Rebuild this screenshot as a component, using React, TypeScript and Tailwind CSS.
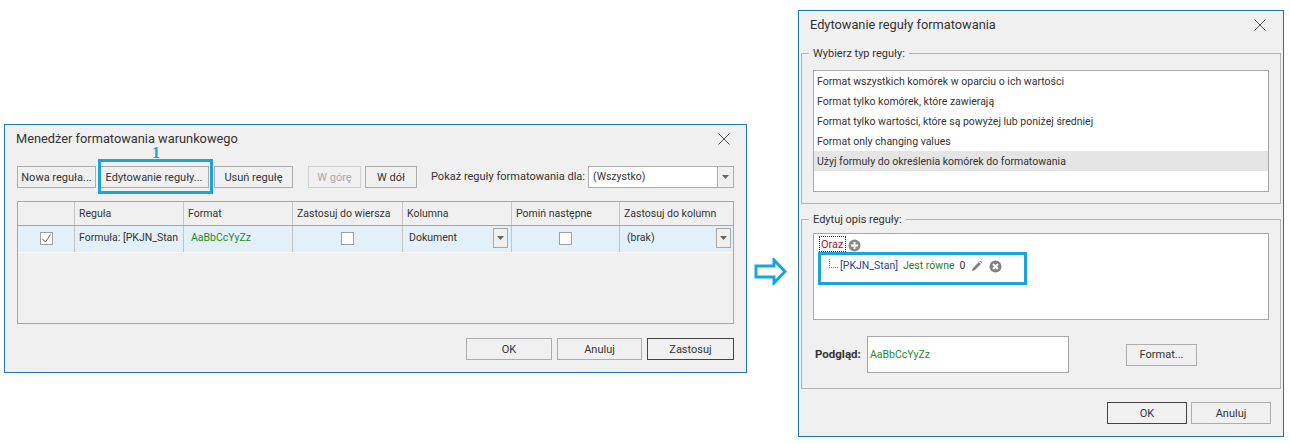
import { ReactNode } from 'react';

const font = "font-['Roboto',sans-serif]";

function Btn({ w, children, dark, disabled }: { w: string; children: ReactNode; dark?: boolean; disabled?: boolean }) {
  return (
    <button
      className={`${w} h-[22px] shrink-0 border bg-[#f0f0f0] text-[11px] leading-none ${
        dark ? 'border-[#444444] text-[#333333]' : disabled ? 'border-[#d0d0d0] text-[#a8a8a8]' : 'border-[#adadad] text-[#333333]'
      }`}
    >
      {children}
    </button>
  );
}

function Close() {
  return (
    <svg width="12" height="12" viewBox="0 0 12 12" className="shrink-0">
      <path d="M.5.5l11 11M11.5.5l-11 11" stroke="#555555" strokeWidth="1" fill="none" />
    </svg>
  );
}

function Caret() {
  return (
    <svg width="7" height="4" viewBox="0 0 7 4">
      <path d="M0 0h7L3.5 4z" fill="#666666" />
    </svg>
  );
}

function Check({ checked }: { checked?: boolean }) {
  return (
    <span className="flex h-[13px] w-[13px] items-center justify-center border border-[#a0a0a0] bg-white">
      {checked && (
        <svg width="11" height="11" viewBox="0 0 11 11">
          <path d="M1.5 6l3 3 5-7.5" stroke="#666666" strokeWidth="1" fill="none" />
        </svg>
      )}
    </span>
  );
}

function ManagerDialog() {
  const headers = ['', 'Reguła', 'Format', 'Zastosuj do wiersza', 'Kolumna', 'Pomiń następne', 'Zastosuj do kolumn'];
  const cols = 'grid grid-cols-[57px_109px_109px_110px_109px_108px_1fr]';
  return (
    <div className="relative ml-[4px] mt-[124px] flex h-[249px] w-[743px] shrink-0 flex-col border border-[#1c77a8] bg-[#f0f0f0] px-[12px]">
      <div className="flex h-[24px] items-end justify-between pr-[4px] text-[12.8px] text-[#333333]">
        <span className="-ml-[1px] leading-[20px]">Menedżer formatowania warunkowego</span>
        <span className="pb-[4px]"><Close /></span>
      </div>

      <div className="mt-[17px] flex items-center">
        <Btn w="w-[79px]">Nowa reguła...</Btn>
        <Btn w="ml-[3px] w-[110px]">Edytowanie reguły...</Btn>
        <Btn w="ml-[5px] w-[79px]">Usuń regułę</Btn>
        <Btn w="ml-[15px] w-[53px]" disabled>W górę</Btn>
        <Btn w="ml-[4px] w-[52px]">W dół</Btn>
        <span className="ml-[14px] text-[11px] text-[#333333]">Pokaż reguły formatowania dla:</span>
        <div className="ml-[3px] flex h-[22px] flex-1 items-center border border-[#adadad] bg-white text-[10.5px] text-[#333333]">
          <span className="flex-1 pl-[4px]">(Wszystko)</span>
          <span className="flex h-full w-[16px] items-center justify-center border-l border-[#adadad] bg-[#f0f0f0]"><Caret /></span>
        </div>
      </div>

      <div className="mt-[13px] h-[123px] border border-[#a8a8a8] bg-[#f0f0f0] text-[10.5px] text-[#333333]">
        <div className={`${cols} h-[24px] border-b border-[#a8a8a8]`}>
          {headers.map((h, i) => (
            <div key={i} className="flex items-center border-r border-[#c4c4c4] pl-[4px] last:border-r-0">{h}</div>
          ))}
        </div>
        <div className={`${cols} h-[27px] border-b border-[#f8f8f8] bg-[#e4f0f8] [&>div]:pb-[2px]`}>
          <div className="flex items-center justify-center border-r border-[#c4c4c4]"><Check checked /></div>
          <div className="flex items-center overflow-hidden whitespace-nowrap border-r border-[#c4c4c4] pl-[4px]">Formuła: [PKJN_Stan</div>
          <div className="flex items-center border-r border-[#c4c4c4] pl-[7px] text-[#1f8a1f]">AaBbCcYyZz</div>
          <div className="flex items-center justify-center border-r border-[#c4c4c4]"><Check /></div>
          <div className="flex items-center justify-between border-r border-[#c4c4c4] pl-[6px] pr-[3px]">
            Dokument
            <span className="flex h-[20px] w-[15px] items-center justify-center border border-[#a8a8a8] bg-[#f0f0f0]"><Caret /></span>
          </div>
          <div className="flex items-center justify-center border-r border-[#c4c4c4]"><Check /></div>
          <div className="flex items-center justify-between pl-[7px] pr-[2px]">
            (brak)
            <span className="flex h-[20px] w-[15px] items-center justify-center border border-[#a8a8a8] bg-[#f0f0f0]"><Caret /></span>
          </div>
        </div>
      </div>

      <div className="mt-[14px] flex justify-end gap-[5px]">
        <Btn w="w-[86px]">OK</Btn>
        <Btn w="w-[85px]">Anuluj</Btn>
        <Btn w="w-[87px]" dark>Zastosuj</Btn>
      </div>

      {/* numbered callout */}
      <div className="absolute left-[93px] top-[34px] h-[35px] w-[115px] border-[3px] border-[#1ba3dc]" />
      <span className="absolute left-[147px] top-[20px] font-['Liberation_Serif',serif] text-[16px] font-bold leading-none text-[#1ba3dc]">1</span>
    </div>
  );
}

function Group({ title, className, children }: { title: string; className: string; children: ReactNode }) {
  return (
    <fieldset className={`${className} rounded-none border border-[#b4b4b4] px-[11px]`}>
      <legend className="-ml-[4px] px-[4px] text-[11px] leading-none text-[#333333]">{title}</legend>
      {children}
    </fieldset>
  );
}

function RuleDialog() {
  const rules = [
    'Format wszystkich komórek w oparciu o ich wartości',
    'Format tylko komórek, które zawierają',
    'Format tylko wartości, które są powyżej lub poniżej średniej',
    'Format only changing values',
    'Użyj formuły do określenia komórek do formatowania',
  ];
  return (
    <div className="relative ml-[10px] mt-[10px] flex h-[427px] w-[486px] shrink-0 flex-col border border-[#1c77a8] bg-[#f0f0f0] px-[2px]">
      <div className="flex h-[28px] items-center justify-between pl-[9px] pr-[15px] text-[12.8px] text-[#333333]">
        <span>Edytowanie reguły formatowania</span>
        <Close />
      </div>

      <Group title="Wybierz typ reguły:" className="mt-[9px] h-[156px] w-[480px]">
        <div className="mt-[11px] h-[122px] border border-[#a8a8a8] bg-white text-[10.5px] text-[#333333]">
          {rules.map((r, i) => (
            <div key={r} className={`flex h-[20px] items-center pl-[3px] pt-[2px] ${i === 4 ? 'bg-[#e5e5e5]' : ''}`}>{r}</div>
          ))}
        </div>
      </Group>

      <Group title="Edytuj opis reguły:" className="mt-[10px] h-[175px] w-[480px]">
        <div className="relative mt-[8px] h-[87px] border border-[#a8a8a8] bg-white text-[10.5px]">
          <div className="ml-[5px] mt-[2px] flex h-[16px] items-center">
            <span className="h-[16px] border border-dotted border-[#333333] pl-[1px] pr-[1px] text-[11px] leading-[16px] text-[#a11d2d]">Oraz</span>
            <svg width="13" height="13" viewBox="0 0 13 13" className="ml-[2px] mt-[2px]">
              <circle cx="6.5" cy="6.5" r="6" fill="#8a8a8a" />
              <path d="M6.5 3v7M3 6.5h7" stroke="#ffffff" strokeWidth="2" />
            </svg>
          </div>
          <div className="ml-[15px] mt-[5px] flex h-[18px] items-center">
            <span className="mb-[6px] h-[9px] w-[9px] border-b border-l border-dotted border-[#777777]" />
            <span className="ml-[2px] text-[#2a3f8f]">[PKJN_Stan]</span>
            <span className="ml-[5px] text-[#2c7a16]">Jest równe</span>
            <span className="ml-[5px] text-[#333333]">0</span>
            <svg width="12" height="12" viewBox="0 0 13 13" className="ml-[6px]">
              <path d="M1 12l.8-3L8.6 2.2l2.2 2.2L4 11.2zM9.4 1.4c.6-.5 1.3-.5 1.8 0l.4.4c.5.5.5 1.2 0 1.8z" fill="#808080" />
            </svg>
            <svg width="13" height="13" viewBox="0 0 13 13" className="ml-[6px]">
              <circle cx="6.5" cy="6.5" r="6" fill="#808080" />
              <path d="M4 4l5 5M9 4l-5 5" stroke="#ffffff" strokeWidth="2" />
            </svg>
          </div>
          {/* highlight round the condition */}
          <div className="absolute left-[4px] top-[18px] h-[33px] w-[209px] border-[3px] border-[#1ba3dc]" />
        </div>
        <div className="mt-[16px] flex items-center">
          <span className="w-[54px] pl-[2px] text-[11.5px] font-bold text-[#333333]">Podgląd:</span>
          <div className="flex h-[37px] w-[202px] items-center border border-[#a8a8a8] bg-white pl-[2px] text-[10.5px] text-[#1f8a1f]">AaBbCcYyZz</div>
          <Btn w="ml-[57px] w-[71px]">Format...</Btn>
        </div>
      </Group>

      <div className="mt-[13px] flex justify-end gap-[4px] pr-[10px]">
        <Btn w="w-[80px]" dark>OK</Btn>
        <Btn w="w-[80px]">Anuluj</Btn>
      </div>
    </div>
  );
}

export default function App() {
  return (
    <div className={`${font} flex h-[444px] w-[1290px] items-start overflow-hidden bg-white`}>
      <ManagerDialog />
      <svg width="34" height="27" viewBox="0 0 34 27" className="ml-[7px] mt-[258px] shrink-0">
        <path d="M2 8h18V2l11 11.5L20 25v-6H2z" fill="#ffffff" stroke="#1ba3dc" strokeWidth="3" />
      </svg>
      <RuleDialog />
    </div>
  );
}
